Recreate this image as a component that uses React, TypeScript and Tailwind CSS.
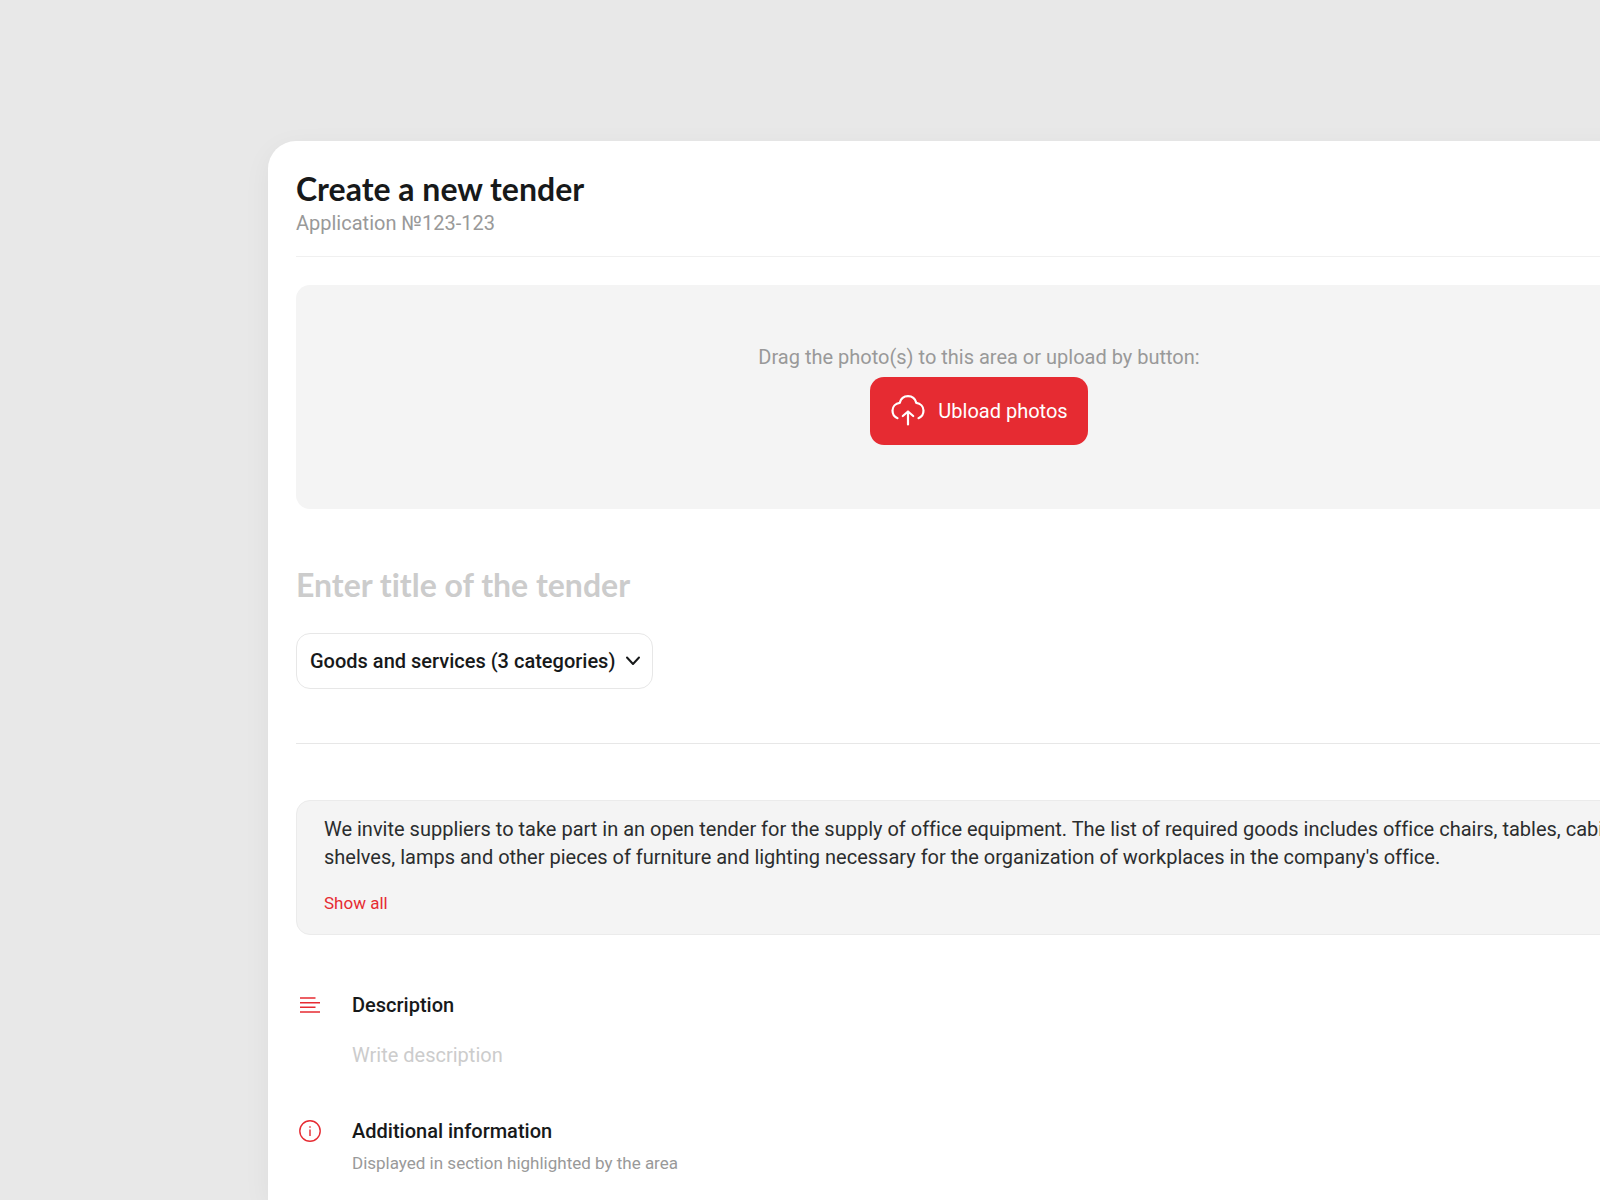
import type { ReactNode } from 'react'
import { useState } from 'react'

function UploadIcon() {
  return (
    <svg className="h-9 w-9 shrink-0" viewBox="0 0 36 36" fill="none" stroke="currentColor" strokeWidth="2.2" strokeLinecap="round" strokeLinejoin="round" aria-hidden="true">
      <path d="M7.5 25.2C4.3 24 2.5 21 2.5 17.6c0-4 3-7.2 7.2-7.7C10.8 5.7 14 3.2 18 3.2s7.2 2.500 8.300 6.700c4.200.5 7.200 3.700 7.200 7.700 0 3.400-1.800 6.400-5 7.600" />
      <path d="M18 31.500V19M12.800 23l5.200-4.500L23.200 23" />
    </svg>
  )
}

function ChevronIcon() {
  return (
    <svg className="h-4 w-4" viewBox="0 0 16 16" fill="none" stroke="currentColor" strokeWidth="2" strokeLinecap="round" strokeLinejoin="round" aria-hidden="true">
      <path d="M2 4.500 8 11l6-6.500" />
    </svg>
  )
}

function LinesIcon() {
  return (
    <svg className="h-7 w-7" viewBox="0 0 28 28" fill="none" stroke="currentColor" strokeWidth="1.4" aria-hidden="true">
      <path d="M4 7h15.500M4 11.700h20M4 16.300h15.500M4 21h20" />
    </svg>
  )
}

function InfoIcon() {
  return (
    <svg className="h-7 w-7" viewBox="0 0 28 28" fill="none" stroke="currentColor" strokeWidth="1.4" aria-hidden="true">
      <circle cx="14" cy="14" r="10.2" />
      <path d="M14 12.500v6.500M14 9.200v1.600" />
    </svg>
  )
}

interface FieldProps {
  icon: ReactNode
  children: ReactNode
}

function Field({ icon, children }: FieldProps) {
  return (
    <div className="flex gap-7">
      <div className="shrink-0 text-[#e62b32]">{icon}</div>
      <div className="min-w-0 flex-1">{children}</div>
    </div>
  )
}

export default function App() {
  const [title, setTitle] = useState('')
  const [description, setDescription] = useState('')

  return (
    <main className="flex min-h-screen flex-col overflow-hidden bg-[#e8e8e8] pl-[268px] pt-[141px] font-['Roboto',sans-serif] text-[20px] leading-7 text-[#17191a] [font-variant-ligatures:none]">
      {/* the sheet runs past the right edge of the window */}
      <section className="-mr-[90px] flex-1 rounded-tl-[28px] bg-white px-7 pt-7 shadow-[0_7px_28px_rgba(0,0,0,0.05)]">
        <header className="border-b border-[#f0f0f0] pb-[19px]">
          <h1 className="font-['Lato',sans-serif] text-[32px] leading-10 font-bold">Create a new tender</h1>
          <p className="text-[#999]">Application №123-123</p>
        </header>

        <div className="mt-7 flex flex-col items-center gap-1.5 rounded-[14px] bg-[#f4f4f4] pt-[58px] pb-16">
          <p className="text-[#999]">Drag the photo(s) to this area or upload by button:</p>
          <button type="button" className="flex h-17 items-center gap-3 rounded-[14px] bg-[#e62b32] px-5 text-white">
            <UploadIcon />
            Ubload photos
          </button>
        </div>

        <input
          type="text"
          aria-label="Title of the tender"
          placeholder="Enter title of the tender"
          value={title}
          onChange={(e) => setTitle(e.target.value)}
          className="mt-14 block h-10 w-full font-['Lato',sans-serif] text-[32px] leading-10 font-bold [font-variant-ligatures:none] outline-none placeholder:text-[#ccc]"
        />

        <div className="mt-7 grid w-fit items-center">
          <select
            aria-label="Categories"
            className="col-start-1 row-start-1 h-14 appearance-none rounded-[14px] border border-[#e7e7e7] bg-white pr-9 pl-[13px] font-medium"
          >
            <option>Goods and services (3 categories)</option>
          </select>
          <span className="pointer-events-none col-start-1 row-start-1 mr-3 justify-self-end">
            <ChevronIcon />
          </span>
        </div>

        <hr className="mt-[54px] border-[#e7e7e7]" />

        <div className="mt-14 rounded-[14px] border border-[#ebebeb] bg-[#f4f4f4] pt-3.5 pr-3 pb-[18px] pl-[27px]">
          <p className="text-[#2b2d2e]">
            We invite suppliers to take part in an open tender for the supply of office equipment. The list of required
            goods includes office chairs, tables, cabinets, shelves, lamps and other pieces of furniture and lighting
            necessary for the organization of workplaces in the company's office.
          </p>
          <a href="#all" className="mt-5 inline-block text-[17px] leading-6 text-[#e62b32]">
            Show all
          </a>
        </div>

        <div className="mt-14 flex flex-col gap-12">
          <Field icon={<LinesIcon />}>
            <label htmlFor="description" className="block font-medium">
              Description
            </label>
            <input
              id="description"
              type="text"
              placeholder="Write description"
              value={description}
              onChange={(e) => setDescription(e.target.value)}
              className="mt-[22px] block h-7 w-full outline-none placeholder:text-[#ccc]"
            />
          </Field>
          <Field icon={<InfoIcon />}>
            <h2 className="font-medium">Additional information</h2>
            <p className="mt-[6px] text-[17px] leading-6 text-[#999]">Displayed in section highlighted by the area</p>
          </Field>
        </div>
      </section>
    </main>
  )
}
